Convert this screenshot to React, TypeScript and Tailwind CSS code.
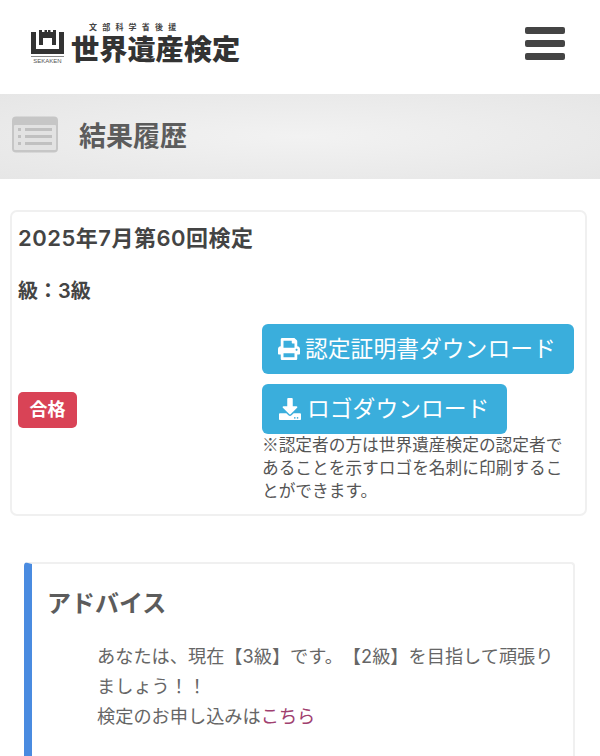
import React from 'react';
import { FaPrint, FaDownload } from 'react-icons/fa';

const font = { fontFamily: 'Inter, "Noto Sans CJK JP", sans-serif' };

const Logo = () => (
  <div className="flex items-end gap-[7px]">
    <div className="flex flex-col items-center w-[33px]">
      {/* castle mark */}
      <svg width="33" height="24" viewBox="0 0 33 24" fill="#333">
        <path d="M0 2h5v17h23V2h5v22H0z" />
        <path d="M8 0h3v2h2.5V0h2.5v2h1V0h2.5v2H22V0h3v15h-4V8h-9v7H8z" />
      </svg>
      <span className="mt-[2px] w-full border-t border-[#888] text-center text-[6px] leading-[8px] text-[#555] font-['Liberation_Sans']">SEKAKEN</span>
    </div>
    <div className="flex flex-col items-start">
      <span className="ml-[18px] text-[8px] leading-[10px] tracking-[5.2px] text-[#444] font-bold">文部科学省後援</span>
      <span className="mt-[3px] text-[28.2px] leading-[30px] font-black text-[#333] whitespace-nowrap">世界遺産検定</span>
    </div>
  </div>
);

const ListIcon = () => (
  <svg width="46" height="37" viewBox="0 0 46 37">
    <rect width="46" height="36" y="0.5" rx="4" fill="#c6c6c6" />
    <rect x="2" y="9" width="42" height="25" rx="1" fill="#e2e2e2" />
    <g fill="#c0c0c0">
      <rect x="6" y="12" width="3" height="3" />
      <rect x="6" y="19" width="3" height="3" />
      <rect x="6" y="26" width="3" height="3" />
      <rect x="13" y="12" width="27" height="3" />
      <rect x="13" y="19" width="27" height="3" />
      <rect x="13" y="26" width="27" height="3" />
    </g>
  </svg>
);

export default function App() {
  return (
    <div style={font} className="h-[756px] overflow-hidden bg-white text-[#4a4a4a] [text-spacing-trim:space-all]">
      {/* Header */}
      <header className="h-[94px] flex items-center justify-between pl-[31px] pr-[35px]">
        <div className="mt-[-7px]">
          <Logo />
        </div>
        <div className="flex flex-col gap-[6px] w-[40px] mb-[7px]">
          <span className="h-[7px] rounded-[2px] bg-[#444]" />
          <span className="h-[7px] rounded-[2px] bg-[#444]" />
          <span className="h-[7px] rounded-[2px] bg-[#444]" />
        </div>
      </header>

      {/* Page title */}
      <div className="h-[85px] flex items-center gap-[21px] pl-[12px] bg-[radial-gradient(ellipse_at_center,#f2f2f2_0%,#e6e6e6_100%)]">
        <div className="mb-[5px]">
          <ListIcon />
        </div>
        <h1 className="text-[27px] font-semibold text-[#5c5c5c] leading-none">結果履歴</h1>
      </div>

      {/* Result card */}
      <section className="ml-[10px] mr-[13px] mt-[31px] h-[306px] border-2 border-[#f0f0f0] rounded-[7px] px-[6px] pt-[10px]">
        <h2 className="text-[22px] leading-[32px] font-semibold tracking-[0.5px] text-[#444]">2025年7月第60回検定</h2>
        <p className="mt-[22px] text-[20px] leading-[30px] font-semibold text-[#444]">級：3級</p>
        <div className="flex items-center mt-[18px]">
          <div className="w-[244px] shrink-0 mb-[7px]">
            <span className="inline-flex items-center justify-center w-[59px] h-[36px] rounded-[5px] bg-[#d94356] text-white text-[18px] font-bold">合格</span>
          </div>
          <div className="flex-1">
            <a className="flex items-center w-[312px] h-[50px] rounded-[6px] bg-[#3aaedc] text-white text-[22.8px] pl-[16px] gap-[5px] whitespace-nowrap">
              <FaPrint size={22} />
              認定証明書ダウンロード
            </a>
            <a className="flex items-center w-[245px] h-[50px] mt-[10px] rounded-[6px] bg-[#3aaedc] text-white text-[22.8px] pl-[17px] gap-[6px] whitespace-nowrap">
              <FaDownload size={22} />
              ロゴダウンロード
            </a>
            <p className="mt-[-1px] text-[16.7px] leading-[23px] text-[#555] w-[304px] font-['Noto_Sans_CJK_JP']">
              ※認定者の方は世界遺産検定の認定者であることを示すロゴを名刺に印刷することができます。
            </p>
          </div>
        </div>
      </section>

      {/* Advice */}
      <section className="ml-[24px] mr-[25px] mt-[46px] h-[300px] border-l-[8px] border-l-[#4a8be0] border-t-2 border-r-2 border-t-[#f0f0f0] border-r-[#f0f0f0] rounded-[4px] pl-[15px] pt-[22px]">
        <h3 className="text-[24px] leading-[36px] font-semibold text-[#5c5c5c]">アドバイス</h3>
        <p className="mt-[19px] ml-[50px] mr-[14px] text-[18.2px] leading-[30px] text-[#666]">
          あなたは、現在【3級】です。【2級】を目指して頑張りましょう！！
          <br />
          検定のお申し込みは<a className="text-[#a0406f]">こちら</a>
        </p>
      </section>
    </div>
  );
}
